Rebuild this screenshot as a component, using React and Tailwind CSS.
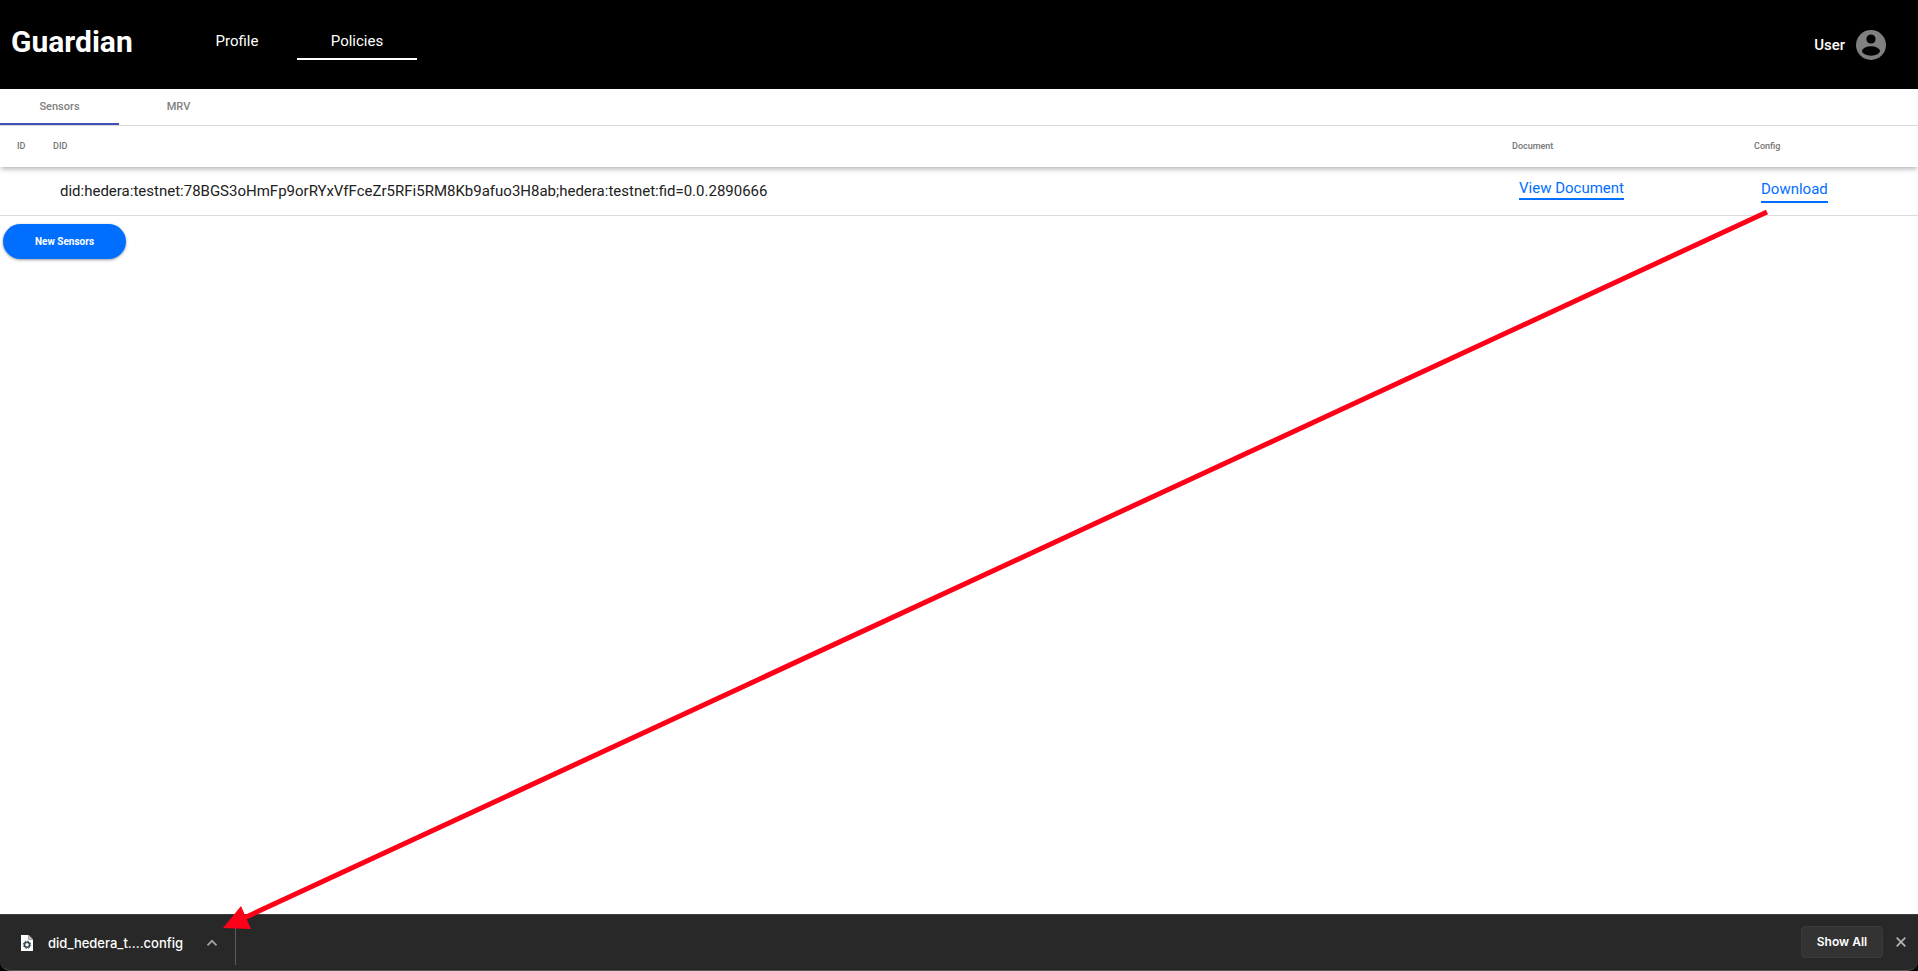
import React from "react";

const NAV = [
  { label: "Profile", active: false },
  { label: "Policies", active: true },
];

const TABS = [
  { label: "Sensors", active: true },
  { label: "MRV", active: false },
];

const SENSORS = [
  {
    id: "",
    did: "did:hedera:testnet:78BGS3oHmFp9orRYxVfFceZr5RFi5RM8Kb9afuo3H8ab;hedera:testnet:fid=0.0.2890666",
  },
];

function Header() {
  return (
    <header className="flex h-[89px] shrink-0 items-start bg-black pl-[11px] pr-8 text-white">
      <h1 className="mt-5 w-[166px] text-[30px] leading-[44px] font-bold">Guardian</h1>
      <nav className="flex pt-6" aria-label="Main">
        {NAV.map((item) => (
          <a
            key={item.label}
            href="#"
            className={
              "h-9 w-[120px] border-b-2 pt-1 text-center text-[15px] leading-[26px] " +
              (item.active ? "border-white" : "border-transparent")
            }
          >
            {item.label}
          </a>
        ))}
      </nav>
      <button type="button" className="mt-[30px] ml-auto flex items-center gap-[11px]">
        <span className="text-[15px] leading-[30px] font-medium">User</span>
        <svg viewBox="0 0 30 30" className="size-[30px]" aria-hidden="true">
          <circle cx="15" cy="15" r="15" fill="#808080" />
          <circle cx="15" cy="9" r="4.6" fill="#000" />
          <ellipse cx="15" cy="21" rx="9" ry="4.7" fill="#000" />
        </svg>
      </button>
    </header>
  );
}

function Tabs() {
  return (
    <div role="tablist" className="flex h-[37px] shrink-0 border-b border-[#dcdcdc]">
      {TABS.map((tab) => (
        <button
          key={tab.label}
          type="button"
          role="tab"
          aria-selected={tab.active}
          className={
            "w-[119px] border-b-2 pt-0.5 text-[11px] leading-8 font-medium text-[#808080] " +
            (tab.active ? "border-[#3f51b5]" : "border-transparent")
          }
        >
          {tab.label}
        </button>
      ))}
    </div>
  );
}

function SensorTable() {
  return (
    <table className="w-full table-fixed border-separate border-spacing-0 text-left">
      <colgroup>
        <col className="w-[53px]" />
        <col />
        <col className="w-[242px]" />
        <col className="w-[164px]" />
      </colgroup>
      <thead>
        <tr className="h-[41px] text-[9px] text-[#757575] shadow-[0_3px_5px_-1px_rgba(0,0,0,0.3)]">
          <th className="pl-[17px] font-medium">ID</th>
          <th className="font-medium">DID</th>
          <th className="font-medium">Document</th>
          <th className="font-medium">Config</th>
        </tr>
      </thead>
      <tbody>
        {SENSORS.map((sensor) => (
          <tr key={sensor.did} className="h-[49px] text-[15px] leading-5 text-[#212121]">
            <td className="border-b border-[#dcdcdc] pl-[17px]">{sensor.id}</td>
            <td className="border-b border-[#dcdcdc] pl-[7px]">{sensor.did}</td>
            <td className="border-b border-[#dcdcdc] pl-[7px] align-top">
              <a href="#" className="mt-[11px] inline-block border-b-2 border-[#006fff] text-[#006fff]">
                View Document
              </a>
            </td>
            <td className="border-b border-[#dcdcdc] pl-[7px] align-top">
              <a href="#" className="mt-3 inline-block border-b-2 border-[#006fff] pb-0.5 text-[#006fff]">
                Download
              </a>
            </td>
          </tr>
        ))}
      </tbody>
    </table>
  );
}

function DownloadBar() {
  return (
    <div className="shrink-0 bg-black">
      <footer className="flex h-[57px] items-center rounded-b-[10px] border-y border-t-[#3c3c3c] border-b-[#555555] bg-[#282828] font-[Inter,sans-serif] text-white">
        <div className="flex h-full w-[235px] items-center pl-[21px]">
          <svg viewBox="0 0 12 16" className="h-4 w-3" aria-hidden="true">
            <path d="M0 0h7.5L12 4.5V16H0z" fill="#fff" />
            <path d="M7.5 0v4.5H12z" fill="#c4c4c4" stroke="#777" strokeWidth=".5" />
            <circle cx="6" cy="9.7" r="2.5" fill="none" stroke="#37474f" strokeWidth="1.6" />
            <circle cx="6" cy="9.7" r="3.7" fill="none" stroke="#37474f" strokeWidth="1" strokeDasharray="1.5 1.4" />
          </svg>
          <span className="ml-[15px] text-[13px] leading-5 font-medium">did_hedera_t....config</span>
          <button type="button" aria-label="Download options" className="mr-[17px] ml-auto">
            <svg viewBox="0 0 12 8" className="h-2 w-3" aria-hidden="true">
              <path d="M1.5 6.3 6 1.8l4.5 4.5" fill="none" stroke="#a5a5a5" strokeWidth="1.7" />
            </svg>
          </button>
        </div>
        <div className="h-11 w-px bg-[#5c5c5c]" />
        <button
          type="button"
          className="mr-[13px] mb-0.5 ml-auto h-8 w-[82px] rounded border border-[#3a3a3a] bg-[#333333] text-[12px] font-semibold"
        >
          Show All
        </button>
        <button type="button" aria-label="Close" className="mr-3 mb-0.5">
          <svg viewBox="0 0 10 10" className="size-[10px]" aria-hidden="true">
            <path d="M.7.7l8.6 8.6M9.3.7.7 9.3" stroke="#b4b4b4" strokeWidth="1.7" />
          </svg>
        </button>
      </footer>
    </div>
  );
}

function Arrow() {
  return (
    <svg
      viewBox="0 0 1918 971"
      preserveAspectRatio="none"
      className="pointer-events-none absolute inset-0 h-full w-full"
      aria-hidden="true"
    >
      <path d="M1767 212 244 918" stroke="#ff0019" strokeWidth="5" />
      <path d="M223 928 241 906l10 23z" fill="#ff0019" />
    </svg>
  );
}

export default function App() {
  return (
    <div className="relative flex min-h-screen flex-col bg-white font-[Roboto,sans-serif]">
      <Header />
      <main className="flex-1">
        <Tabs />
        <SensorTable />
        <button
          type="button"
          className="mt-2 ml-[3px] h-[35px] w-[123px] rounded-full bg-[#006fff] text-[10px] font-bold text-white shadow-[0_1px_3px_rgba(0,0,0,0.4)]"
        >
          New Sensors
        </button>
      </main>
      <DownloadBar />
      <Arrow />
    </div>
  );
}
